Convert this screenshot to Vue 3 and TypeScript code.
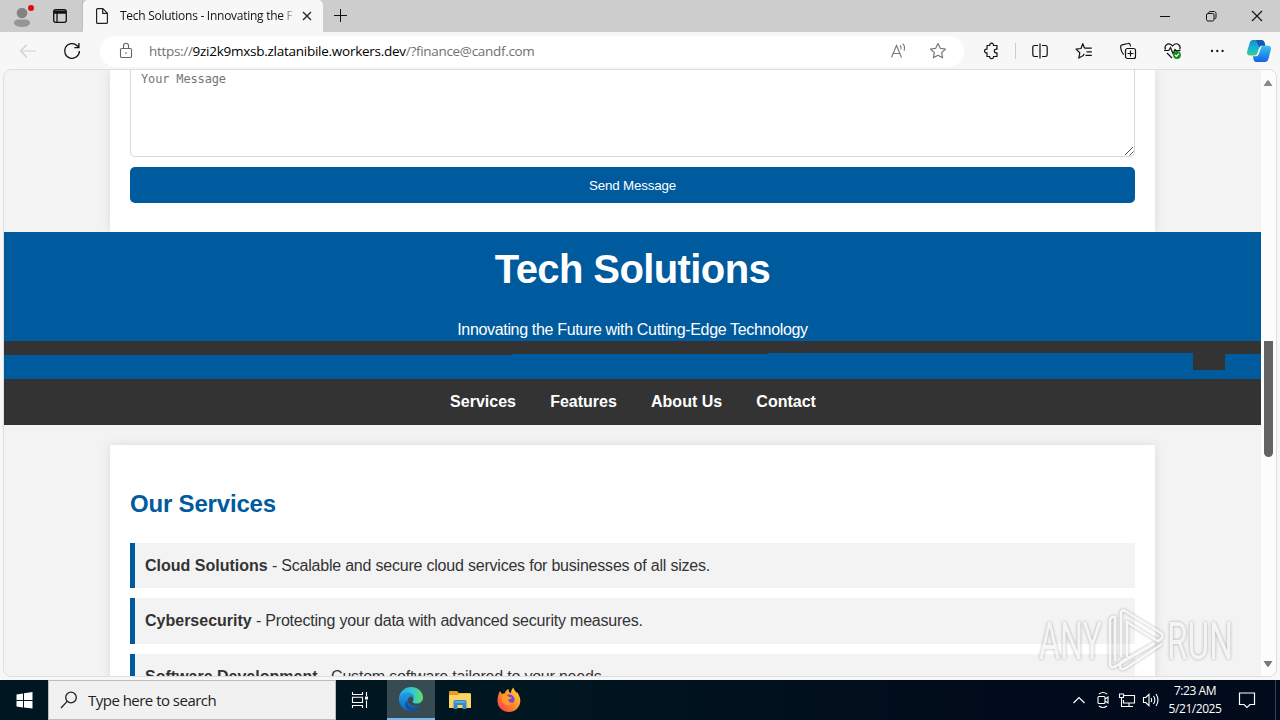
<script setup lang="ts">
interface Service {
  name: string
  text: string
}

const services: Service[] = [
  { name: 'Cloud Solutions', text: 'Scalable and secure cloud services for businesses of all sizes.' },
  { name: 'Cybersecurity', text: 'Protecting your data with advanced security measures.' },
  { name: 'Software Development', text: 'Custom software tailored to your needs.' },
]
const links: string[] = ['Services', 'Features', 'About Us', 'Contact']
</script>

<template>
  <div class="screen">
    <div class="tabbar">
      <div class="tab-left">
        <svg class="profile" width="24" height="28" viewBox="0 0 24 28">
          <circle cx="12" cy="13" r="5.3" fill="#858381" />
          <path d="M4 23.5c0-3 1.5-4 4-4h8c2.5 0 4 1 4 4-1 2.400-4 3.500-8 3.500s-7-1.100-8-3.500z" fill="#989694" />
          <circle cx="21" cy="8" r="3" fill="#e00b0b" />
        </svg>
        <svg class="workspaces" width="16" height="16" viewBox="0 0 16 16" fill="none" stroke="#111" stroke-width="1.3">
          <rect x="1.700" y="1.700" width="12.600" height="12.600" rx="2" />
          <path d="M2 3.500h12M2 4.800h12" stroke-width="2" />
          <path d="M5 5v9" />
        </svg>
      </div>
      <div class="tab">
        <svg class="doc" width="14" height="18" viewBox="0 0 14 18" fill="none" stroke="#222" stroke-width="1.2">
          <path d="M1.600 2.600c0-.6.4-1 1-1h5.200l4.600 4.600v9.200c0 .6-.4 1-1 1H2.600c-.6 0-1-.4-1-1zM7.700 1.800v4.500h4.500" />
        </svg>
        <span class="tab-title">Tech Solutions - Innovating the F</span>
        <svg class="close" width="10" height="10" viewBox="0 0 10 10" stroke="#222" stroke-width="1.3"><path d="M1 1l8 8M9 1L1 9" /></svg>
      </div>
      <svg class="plus" width="15" height="15" viewBox="0 0 15 15" stroke="#111" stroke-width="1"><path d="M7.500 1v13M1 7.500h13" /></svg>
      <div class="winbtns">
        <svg width="12" height="12" viewBox="0 0 12 12" stroke="#111"><path d="M1 6.500h10" /></svg>
        <svg width="12" height="12" viewBox="0 0 12 12" fill="none" stroke="#111"><rect x="1.500" y="3.500" width="7.500" height="7.500" rx="1.500" /><path d="M3.700 3.300V3c0-1 .6-1.500 1.500-1.500H9c1.100 0 2 .9 2 2v3.700c0 1-.6 1.600-1.700 1.600" /></svg>
        <svg width="12" height="12" viewBox="0 0 12 12" stroke="#111" stroke-width="1.100"><path d="M1 1l10 10M11 1L1 11" /></svg>
      </div>
    </div>

    <div class="toolbar">
      <svg class="back" width="18" height="16" viewBox="0 0 18 16" fill="none" stroke="#cfcfcf" stroke-width="1.200"><path d="M8 1.500L1.500 8 8 14.500M1.500 8h15.500" /></svg>
      <svg class="reload" width="18" height="18" viewBox="0 0 18 18" fill="none" stroke="#111" stroke-width="1.300"><path d="M16.400 9A7.400 7.400 0 1 1 14.200 3.700L15.800 5.300M15.900 1v4.600h-4.500" /></svg>
      <div class="address">
        <svg class="lock" width="14" height="18" viewBox="0 0 14 18" fill="none" stroke="#666" stroke-width="1.100"><rect x="1.500" y="6.500" width="11" height="9" rx="1.300" /><path d="M4.500 6.500v-2.700a2.500 2.500 0 0 1 5 0v2.700" /><circle cx="7" cy="11" r=".8" fill="#555" stroke="none" /></svg>
        <span class="url">https://<b>9zi2k9mxsb.zlatanibile.workers.dev</b>/?finance@candf.com</span>
        <svg class="aloud" width="18" height="18" viewBox="0 0 18 18" fill="none" stroke="#777" stroke-width="1.100"><path d="M1.500 15.500L6.500 3.500l5 12M3.400 11.500h6.200M10 3.500c1 1 1.300 2.500.9 3.900M12.700 1.700c1.900 2 2.300 4.600 1.300 7" /></svg>
        <svg class="star" width="18" height="18" viewBox="0 0 18 18" fill="none" stroke="#777" stroke-width="1.200" stroke-linejoin="round"><path d="M9 1.600l2.300 4.700 5.200.7-3.800 3.600.9 5.200L9 13.300l-4.600 2.500.9-5.200L1.500 7l5.200-.7z" /></svg>
      </div>
      <div class="tools">
        <svg width="18" height="18" viewBox="0 0 18 18" fill="none" stroke="#111" stroke-width="1.200" stroke-linejoin="round"><path d="M4 3.500h2.700c-.2-1.500.7-2.300 1.900-2.300s2.100.8 1.900 2.300H14v3.700c-1.600-.3-2.700.5-2.700 1.800s1.100 2.200 2.700 1.900v3.600h-3.500c.1 1.400-.8 2.200-1.900 2.200s-2-.8-1.900-2.200H4v-3.600C2.500 11 1.500 10.200 1.500 9S2.500 7 4 7.200z" /></svg>
        <i class="divider"></i>
        <svg width="18" height="18" viewBox="0 0 18 18" fill="none" stroke="#111" stroke-width="1.200"><path d="M7 3.500H3.500c-1 0-1.700.7-1.700 1.700v7.600c0 1 .7 1.700 1.700 1.700H7M11 3.500h3.500c1 0 1.700.7 1.700 1.700v7.600c0 1-.7 1.700-1.700 1.700H11M9 1.500v15" /></svg>
        <svg width="18" height="18" viewBox="0 0 18 18" fill="none" stroke="#111" stroke-width="1.200" stroke-linejoin="round"><path d="M10.500 6.200H16.800M11.500 9.800h5.300M10.500 13.400h6.300M9.500 6.200L7.800 1.600 6 6.500l-5 .6 3.800 3.700-1 5.300 4.500-2.500M9.500 6.200h1.500M8.300 13.600l.8-1.800" /></svg>
        <svg width="18" height="18" viewBox="0 0 18 18" fill="none" stroke="#111" stroke-width="1.200"><rect x="6.500" y="6.500" width="10" height="10" rx="2" /><path d="M11.500 8.500v6M8.500 11.500h6M4.800 12.500C3 11 2 8 1.600 5c-.1-1.200.4-1.900 1.500-2.200L9 1.500c1.200-.3 1.900.2 2.200 1.300l.4 1.500" /></svg>
        <svg width="20" height="18" viewBox="0 0 20 18" fill="none" stroke="#111" stroke-width="1.200"><path d="M2.500 7.500C.8 4 4.500.2 8 2.600L9.500 4 11 2.600c3.500-2.400 7.300 1.200 5.700 4.800M1 8.500h4.700l1.800-3 2.500 6 2-4 1 1h4.500M4 11l5 5" /><circle cx="14" cy="13" r="3.900" fill="#158a1c" stroke="none" /><path d="M12 13l1.400 1.300 2.500-2.600" stroke="#fff" /></svg>
        <svg class="more" width="18" height="18" viewBox="0 0 18 18" fill="#111"><circle cx="4" cy="9" r="1.150" /><circle cx="9.300" cy="9" r="1.150" /><circle cx="14.600" cy="9" r="1.150" /></svg>
        <svg class="copilot" width="26" height="26" viewBox="0 0 26 26">
          <defs>
            <linearGradient id="cp1" x1="0" y1="0" x2="0" y2="1"><stop offset="0" stop-color="#168bd0" /><stop offset=".55" stop-color="#19b6cf" /><stop offset="1" stop-color="#3bcf8c" /></linearGradient>
            <linearGradient id="cp2" x1="0" y1="0" x2="0" y2="1"><stop offset="0" stop-color="#35c5ed" /><stop offset="1" stop-color="#1762e8" /></linearGradient>
          </defs>
          <path d="M7 2h8c2 0 3 1 3.500 2.600L19 7h-2c-2 0-3 1-3.600 2.600l-1.900 5.400c-.6 1.800-1.600 2.500-3.500 2.500H4c-2.500 0-3.500-1.700-2.800-4.300L3.600 5C4.300 3 5.200 2 7 2z" fill="url(#cp1)" />
          <path d="M19 24h-8c-2 0-3-1-3.500-2.600L7 18.300h2c2 0 3-1 3.600-2.600l1.900-5.400c.6-1.800 1.600-2.500 3.500-2.500h4c2.500 0 3.500 1.700 2.800 4.300L22.400 21c-.7 2-1.600 3-3.400 3z" fill="url(#cp2)" />
          <path d="M10 2h5c2 0 3 1 3.500 2.600l1 3.200H17c-1.500 0-2.700.8-3.300 2.200z" fill="#1459b5" />
          <path d="M13.600 9.200q1-1.700 2.800-1.700-1 .8-1.500 2.300l-2 6q-.9 2.400-2.900 2.400 1-.8 1.600-2.600z" fill="#fff" />
        </svg>
      </div>
    </div>

    <div class="view">
      <div class="page">
        <div class="card contact">
          <div class="message">Your Message
            <svg class="grip" width="10" height="10" viewBox="0 0 10 10" stroke="#555" stroke-width="1"><path d="M1 9l8-8M5.500 9.500l4-4" /></svg>
          </div>
          <div class="send">Send Message</div>
        </div>
        <header>
          <h1>Tech Solutions</h1>
          <p>Innovating the Future with Cutting-Edge Technology</p>
          <svg class="band" width="1257" height="30" viewBox="0 0 1257 30"><path d="M0 0H1257V13H1221V29H1189V12H764V13H508V14H0z" fill="#333" /></svg>
        </header>
        <nav><a v-for="link in links" :key="link">{{ link }}</a></nav>
        <div class="card services">
          <h2>Our Services</h2>
          <div v-for="s in services" :key="s.name" class="service"><strong>{{ s.name }}</strong> - {{ s.text }}</div>
        </div>
      </div>
      <div class="scroll">
        <svg class="up" width="10" height="6" viewBox="0 0 10 6"><path d="M.5 6L4 .8q1-1 2 0L9.500 6z" fill="#888" /></svg>
        <div class="thumb"></div>
        <svg class="down" width="10" height="6" viewBox="0 0 10 6"><path d="M.5 0L4 5.200q1 1 2 0L9.500 0z" fill="#777" /></svg>
      </div>
      <svg class="watermark" width="204" height="76" viewBox="0 0 204 76">
        <g class="letters">
          <text x="3" y="56" textLength="63" lengthAdjust="spacingAndGlyphs">ANY</text>
          <text x="131" y="56" textLength="66" lengthAdjust="spacingAndGlyphs">RUN</text>
        </g>
        <g class="play">
          <path d="M85 54V11q0-5 4-3l36 22q3 3 0 6t-5 1L91 19v35" />
          <path d="M80 14q-6-1-6 4v43q0 5 6 2l36-21M79 14v44" />
          <path d="M126 41L90 65q-5 3-6-1t3-6l32-18" />
        </g>
      </svg>
    </div>

    <div class="taskbar">
      <div class="start"><svg width="17" height="17" viewBox="0 0 17 17" fill="#fff"><path d="M.5 2.500L7 1.500V8H.5zM8 1.300L16.500 0v8H8zM.5 9H7v6.500l-6.500-1zM8 9h8.500v7.500L8 15.500z" /></svg></div>
      <div class="search">
        <svg width="18" height="18" viewBox="0 0 18 18" fill="none" stroke="#222" stroke-width="1.300"><circle cx="11" cy="6.500" r="5.300" /><path d="M7.200 10.400L1 17" /></svg>
        <span>Type here to search</span>
      </div>
      <div class="app first"><svg width="18" height="18" viewBox="0 0 18 18" fill="none" stroke="#fff" stroke-width="1.100"><path d="M1.500 1v2.500h10V1M1.500 17v-2.500h10V17M1.500 6.300h10v5.200h-10zM15.500 1v4M15.500 9.500v7.500" /><path d="M14 5.500h3v3h-3z" fill="#fff" stroke="none" /></svg></div>
      <div class="app active">
        <svg width="26" height="26" viewBox="0 0 26 26">
          <defs>
            <linearGradient id="eg1" x1="0" y1="0" x2="1" y2="0"><stop offset="0" stop-color="#29a8e8" /><stop offset=".55" stop-color="#31c7d5" /><stop offset="1" stop-color="#64df5b" /></linearGradient>
            <linearGradient id="eg2" x1="0" y1="0" x2="0" y2="1"><stop offset="0" stop-color="#1f9ee8" /><stop offset="1" stop-color="#1266bd" /></linearGradient>
          </defs>
          <path d="M1 12C2 5 7 1 13 1c7 0 12 5 12 10.500 0 4-3 6-6.500 6-3 0-4.500-1-3.500-2.500 1.500-2 0-5.500-4-5.500C6 9.500 2.500 11 1 16z" fill="url(#eg1)" />
          <path d="M1 13c.8-4.500 4.500-6.500 8.500-6.500 4.500 0 7 2.600 7 5.500-2-2.400-6-2-6.700 1.800C9 18.500 14 22 22.500 20 20 23.500 17 25 13 25 6 25 .8 19.500 1 13z" fill="url(#eg2)" />
          <path d="M9.700 14C8 19 13 23.500 22.500 20c-2 3.400-5.500 5-9.500 5-5.500-1-8-7.500-3.300-11z" fill="#12509f" />
        </svg>
      </div>
      <div class="app">
        <svg width="24" height="22" viewBox="0 0 24 22"><path d="M1 3q0-1 1-1h7l2 2h11v5H1z" fill="#e99b16" /><path d="M1 6h9l1.500-1.500H23V19H1z" fill="#fbd468" /><path d="M5.500 20v-7q0-2 2-2h9q2 0 2 2v7h-4v-4h-5v4z" fill="#3489c8" /><path d="M7 12h10v2H7z" fill="#5cabdf" /></svg>
      </div>
      <div class="app">
        <svg width="26" height="26" viewBox="0 0 26 26">
          <defs><linearGradient id="ff1" x1="1" y1="0" x2="0" y2="1"><stop offset="0" stop-color="#ffe045" /><stop offset=".45" stop-color="#ff9525" /><stop offset="1" stop-color="#f92e58" /></linearGradient></defs>
          <path d="M4 4l2 3 3-1c.5-2 2-3.400 3.500-4L13 5l2 1c0-2.400 1-4.500 2.500-5.500.3 2.500 2 3.500 3.500 5.500V5c2 3 3.500 6 3.300 9C24 20.500 19 25 13 25S1.500 20.500 1.500 14C1.500 10 2.500 6.500 4 4z" fill="url(#ff1)" />
          <circle cx="13.500" cy="12.500" r="5" fill="#7848d8" />
          <path d="M6 8c3-1 5.500 0 7 2l3 .2c-.5 1.300-2 1.800-3.500 2.300-.5 2.700 2.500 4 5 2.800-2 3.500-7.500 4-10 .7C5.500 14 5 10.500 6 8z" fill="#ff9928" />
        </svg>
      </div>
      <div class="tray">
        <svg width="14" height="8" viewBox="0 0 14 8" fill="none" stroke="#fff" stroke-width="1.200"><path d="M1.500 7L7 1.500 12.500 7" /></svg>
        <svg class="meet" width="14" height="18" viewBox="0 0 14 18" fill="none" stroke="#fff" stroke-width="1.100"><rect x="2" y="5.500" width="7" height="7" rx="1" /><path d="M9 8l3-2v6l-3-2M3 3q4-3 8 0M3 15q4 3 8 0" /></svg>
        <svg class="net" width="18" height="16" viewBox="0 0 18 16" fill="none" stroke="#fff" stroke-width="1.100"><path d="M6 3.500h10.500v7.500H5.500V8M11 11v3M7 14.500h8M1.500 2h4v3.500h-4zM3.500 5.500v9H7" /></svg>
        <svg class="vol" width="18" height="16" viewBox="0 0 18 16" fill="none" stroke="#fff" stroke-width="1.100"><path d="M1.500 5.500h2.300L7 2.300v11.400L3.800 10.500H1.500zM9 6q1.300 2 0 4M11.500 4q2.700 4 0 8M14 2q4 6 0 12" /></svg>
        <div class="clock"><span>7:23 AM</span><span class="date">5/21/2025</span></div>
        <svg class="note" width="18" height="18" viewBox="0 0 18 18" fill="none" stroke="#fff" stroke-width="1.200"><path d="M1.500 2h15v11.500H12L9 16.500l-3-3H1.500z" /></svg>
      </div>
    </div>
  </div>
</template>

<style>
body {
  margin: 0;
  overflow: hidden;
}
</style>

<style scoped>
* {
  box-sizing: border-box;
}
svg {
  display: block;
  flex: none;
}
.screen {
  width: 1280px;
  height: 720px;
  display: flex;
  flex-direction: column;
  overflow: hidden;
  background: #f7f7f7;
  font-family: "Open Sans", "Noto Sans", sans-serif;
}
.tabbar {
  height: 32px;
  flex: none;
  display: flex;
  background: #cdcdcd;
}
.tab-left {
  width: 83px;
  display: flex;
  border-bottom-right-radius: 5px;
  border-right: 1px solid #bcbcbc;
}
.profile {
  margin-left: 10px;
}
.workspaces {
  margin: 8px 0 0 18px;
}
.tab {
  width: 240px;
  display: flex;
  align-items: center;
  background: #f7f7f7;
  border-radius: 5px 5px 0 0;
}
.doc {
  margin-left: 12px;
}
.tab-title {
  width: 175px;
  margin-left: 11px;
  font-size: 12px;
  letter-spacing: -0.27px;
  line-height: 30px;
  white-space: nowrap;
  overflow: hidden;
  color: transparent;
  background: linear-gradient(90deg, #111 162px, #ccc 172px);
  background-clip: text;
}
.close {
  margin-left: 7px;
}
.plus {
  margin: 8px 0 0 10px;
}
.winbtns {
  margin: 10px 17px 0 auto;
  display: flex;
  gap: 34px;
}
.toolbar {
  height: 38px;
  flex: none;
  display: flex;
  align-items: center;
  background: #f7f7f7;
}
.back {
  margin-left: 19px;
}
.reload {
  margin-left: 26px;
}
.address {
  width: 864px;
  height: 31px;
  margin-left: 19px;
  display: flex;
  align-items: center;
  background: #fff;
  border-radius: 16px;
}
.lock {
  margin-left: 19px;
}
.url {
  width: 740px;
  margin-left: 16px;
  font-size: 13.5px;
  line-height: 20px;
  letter-spacing: -0.31px;
  color: #717171;
  white-space: nowrap;
}
.url b {
  font-weight: 400;
  letter-spacing: -0.26px;
  color: #000;
}
.aloud {
  margin-left: 1px;
}
.star {
  margin-left: 21px;
}
.tools {
  margin-left: 19px;
  display: flex;
  align-items: center;
}
.tools svg + svg {
  margin-left: 26.3px;
}
.tools .divider {
  width: 1px;
  height: 16px;
  margin: 0 15px 0 14px;
  background: #ccc;
}
.tools .divider + svg {
  margin-left: -0.5px;
}
.tools svg.more {
  margin-left: 24.5px;
}
.tools svg.copilot {
  margin-left: 19.7px;
}
.view {
  position: relative;
  width: 1274px;
  height: 608px;
  margin: -1px 0 3px 3px;
  flex: none;
  display: flex;
  background: #fcfcfc;
  border: 1px solid #dedede;
  border-radius: 8px;
  overflow: hidden;
}
.page {
  width: 1257px;
  height: 606px;
  flex: none;
  overflow: hidden;
  background: #f3f3f3;
  color: #333;
  font: 16px/25.6px "Liberation Sans", Arial, sans-serif;
}
.card {
  width: 1045px;
  margin: 0 auto;
  padding: 0 20px;
  background: #fff;
  box-shadow: 0 0 10px rgba(0, 0, 0, 0.1);
}
.contact {
  height: 162px;
}
.message {
  position: relative;
  height: 87px;
  padding: 2px 10px;
  border: 1px solid #d6d6d6;
  border-top: 0;
  border-radius: 0 0 5px 5px;
  color: #757575;
  font: 12px/15px "DejaVu Sans Mono", monospace;
  letter-spacing: -0.15px;
}
.grip {
  position: absolute;
  right: 0;
  bottom: 0;
}
.send {
  height: 36px;
  margin-top: 10px;
  border-radius: 5px;
  background: #005a9e;
  color: #fff;
  font-size: 13.333px;
  line-height: 37px;
  letter-spacing: -0.15px;
  text-align: center;
}
header {
  position: relative;
  height: 147px;
  background: #005a9e;
  color: #fff;
  text-align: center;
}
h1 {
  margin: 0;
  padding-top: 5px;
  font-size: 40px;
  line-height: 64px;
  letter-spacing: -0.6px;
}
header p {
  margin: 0;
  padding-top: 16px;
  line-height: 25px;
  letter-spacing: -0.33px;
}
.band {
  position: absolute;
  left: 0;
  top: 109px;
}
nav {
  height: 46px;
  padding-left: 1px;
  display: flex;
  justify-content: center;
  gap: 34.2px;
  background: #333;
  color: #fff;
  font-weight: 700;
  line-height: 45px;
}
.services {
  height: 300px;
  margin-top: 20px;
  padding-top: 38.8px;
}
h2 {
  height: 59px;
  margin: 0;
  color: #005a9e;
  font-size: 24px;
  line-height: 40px;
  letter-spacing: -0.18px;
}
.service {
  height: 45.6px;
  margin-bottom: 10px;
  padding: 10px;
  border-left: 5px solid #005a9e;
  background: #f3f3f3;
  letter-spacing: -0.21px;
}
.service strong {
  letter-spacing: 0;
}
.scroll {
  width: 15px;
  display: flex;
  flex-direction: column;
  align-items: center;
}
.up {
  margin: 10px 1px 0 0;
}
.thumb {
  width: 9px;
  height: 116px;
  margin-top: 255px;
  border-radius: 0 0 5px 5px;
  background: #636363;
}
.down {
  margin: 204px 1px 0 0;
}
.watermark {
  position: absolute;
  left: 1032px;
  top: 533px;
  opacity: 0.75;
  filter: drop-shadow(0 0 1.5px rgba(0, 0, 0, 0.4));
}
.letters {
  fill: #f5f5f5;
  font: 400 51px Roboto, sans-serif;
}
.play path {
  fill: none;
  stroke: #f8f8f8;
  stroke-width: 2.6px;
  stroke-linejoin: round;
}
.taskbar {
  height: 40px;
  flex: none;
  display: flex;
  background: linear-gradient(90deg, #001721 0, #001721 500px, #020b1b 1000px, #020b1b 100%);
}
.start,
.app {
  width: 48px;
  display: flex;
  align-items: center;
  justify-content: center;
}
.search {
  width: 288px;
  padding-left: 11px;
  display: flex;
  align-items: center;
  gap: 10px;
  background: #f1f1f1;
  border: 1px solid #bdbdbd;
  color: #222;
  font-size: 15px;
  letter-spacing: -0.52px;
  white-space: nowrap;
}
.app {
  width: 49px;
}
.app.first {
  width: 51px;
  padding-right: 3px;
}
.app.active {
  width: 48px;
  background: #374b52;
  border-bottom: 2px solid #76b9ed;
}
.tray {
  margin-left: auto;
  margin-right: 4px;
  display: flex;
  align-items: center;
  border-right: 1px solid #3b4350;
}
.meet {
  margin-left: 10px;
}
.net {
  margin-left: 8px;
}
.vol {
  margin-left: 6px;
}
.clock {
  width: 60px;
  margin-left: 5px;
  display: flex;
  flex-direction: column;
  align-items: center;
  color: #fff;
  font-size: 12px;
  line-height: 18px;
  letter-spacing: -0.45px;
  white-space: nowrap;
}
.note {
  margin: 0 19px 0 13px;
}
</style>
